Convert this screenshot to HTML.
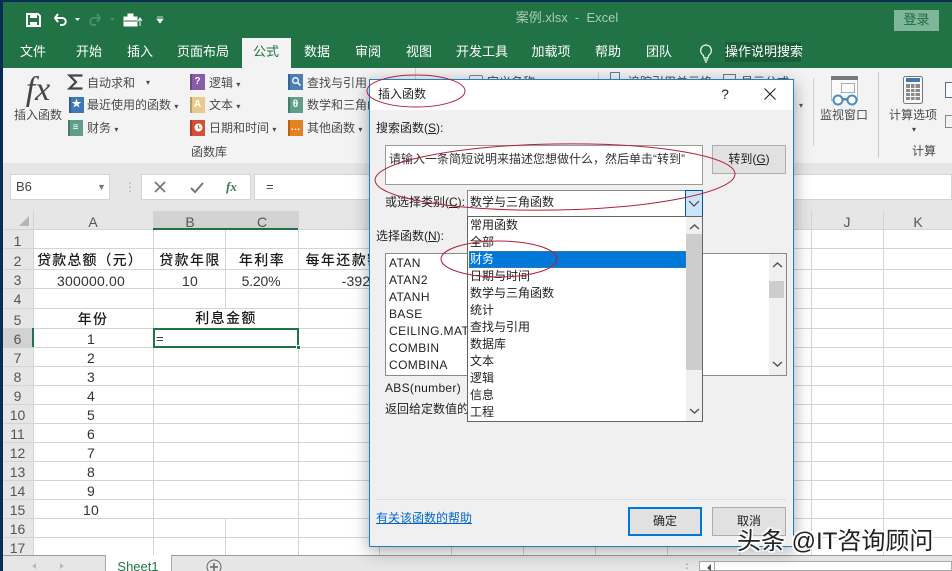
<!DOCTYPE html>
<html lang="zh"><head><meta charset="utf-8"><title>案例.xlsx - Excel</title>
<style>
html,body{margin:0;padding:0;background:#fff}
#p{position:relative;width:952px;height:571px;overflow:hidden;background:#fff;font-family:"Liberation Sans","Noto Sans CJK SC",sans-serif;font-size:12px;color:#444}
.a{position:absolute}
.t{position:absolute;height:20px;line-height:20px;white-space:nowrap}
.c{transform:translateX(-50%)}
.tab{color:#fff;font-size:13px;top:42px}
.r{color:#4a4a4a;font-size:12px}
.rn{position:absolute;left:3px;width:29px;text-align:center;font-size:14px;color:#555;height:20px;line-height:20px}
.cell{position:absolute;font-size:14px;color:#333;height:20px;line-height:20px;white-space:nowrap;transform:translateX(-50%);letter-spacing:.2px}
.h{font-weight:500;color:#1a1a1a;letter-spacing:1.4px}
.d{color:#222;font-size:12px}
.ic{position:absolute;width:15px;height:16px;color:#fff;font-size:10px;line-height:15px;text-align:center;font-weight:bold;box-shadow:inset 2px 0 rgba(0,0,0,.22)}
.ic svg{position:absolute;left:3px;top:2px}
.btn{position:absolute;background:#e1e1e1;border:1px solid #adadad;box-sizing:border-box;text-align:center;color:#222}
.li{position:absolute;left:2px;height:17px;line-height:17px;white-space:nowrap;color:#222}
</style></head><body><div id="p">

<!-- title bar -->
<div class="a" style="left:0;top:0;width:952px;height:68px;background:#217346"></div>
<div class="a" style="left:0;top:0;width:952px;height:2px;background:#0b2c52"></div>
<div class="a" style="left:0;top:0;width:3px;height:571px;background:#0b2c52;z-index:9"></div>
<svg class="a" style="left:0;top:0" width="180" height="38">
 <path d="M27 14h11l2 2v10H27z" fill="none" stroke="#fff" stroke-width="2"/><path d="M30 14h7v4h-7zM30 22h7v4h-7z" fill="#fff"/>
 <path d="M58 14l-3 4 3 4M55 18h7c5 0 5 7 0 7h-2" fill="none" stroke="#fff" stroke-width="2"/><path d="M75 18h5l-2.500 3z" fill="#fff"/>
 <path d="M97 14l3 4-3 4M100 18h-6c-5 0-5 7 0 7h2" fill="none" stroke="#4a8f6b" stroke-width="2"/><path d="M110 18h5l-2.500 3z" fill="#4a8f6b"/>
 <path d="M124 17h13v9h-13zM128 17v-3h5v3" fill="#fff" stroke="#fff"/><path d="M124 21h13" stroke="#217346"/><path d="M140 19v7M138 21l2-3 2 3" stroke="#fff" fill="none"/>
 <path d="M157 17h6M157 19h6l-3 4z" fill="#fff" stroke="#fff" stroke-width=".8"/>
</svg>
<div class="t c" style="left:567px;top:8px;color:#a9cdb9;font-size:13px">案例.xlsx&nbsp; -&nbsp; Excel</div>
<div class="t" style="left:894px;top:10px;width:45px;height:21px;line-height:20px;background:#7fb598;color:#1f6b42;text-align:center;font-size:13px">登录</div>

<!-- tabs -->
<div class="a" style="left:242px;top:38px;width:49px;height:31px;background:#f3f3f3"></div>
<div class="t tab c" style="left:33px">文件</div><div class="t tab c" style="left:89px">开始</div><div class="t tab c" style="left:140px">插入</div><div class="t tab c" style="left:203px">页面布局</div>
<div class="t tab c" style="left:266px;color:#217346">公式</div><div class="t tab c" style="left:317px">数据</div><div class="t tab c" style="left:368px">审阅</div><div class="t tab c" style="left:419px">视图</div><div class="t tab c" style="left:482px">开发工具</div><div class="t tab c" style="left:551px">加载项</div><div class="t tab c" style="left:608px">帮助</div><div class="t tab c" style="left:659px">团队</div>
<svg class="a" style="left:697px;top:43px" width="18" height="22"><path d="M9 2a5.500 5.500 0 0 0-3 10c1 1 1 2 1 3h4c0-1 0-2 1-3A5.500 5.500 0 0 0 9 2zM7 17h4M8 19h2" fill="none" stroke="#fff" stroke-width="1.200"/></svg>
<div class="t tab" style="left:725px;width:76px;background:#1b5f3a;text-align:center">操作说明搜索</div>

<!-- ribbon -->
<div class="a" style="left:0;top:68px;width:952px;height:95px;background:#f3f3f3;border-bottom:1px solid #d4d4d4"></div>
<div class="t c" style="left:38px;top:72px;height:36px;line-height:36px;font:italic 34px/36px 'Liberation Serif',serif;color:#444">fx</div>
<div class="t r c" style="left:38px;top:105px">插入函数</div>
<svg class="a" style="left:67px;top:73px" width="18" height="18"><path d="M15.500 2.500H2.500L9 9l-6.500 6.500h13" fill="none" stroke="#444" stroke-width="2.200"/></svg>
<div class="t r" style="left:87px;top:73px">自动求和</div><div class="t r" style="left:146px;top:73px;font-size:8px">▾</div>
<div class="ic" style="left:69px;top:97px;background:#3f78b5">★</div><div class="t r" style="left:87px;top:95px">最近使用的函数 <span style="font-size:8px">▾</span></div>
<div class="ic" style="left:68px;top:120px;background:#5e9e8a">≡</div><div class="t r" style="left:87px;top:118px">财务 <span style="font-size:8px">▾</span></div>
<div class="ic" style="left:190px;top:74px;background:#8a5ba8">?</div><div class="t r" style="left:209px;top:73px">逻辑 <span style="font-size:8px">▾</span></div>
<div class="ic" style="left:190px;top:97px;background:#eac98c">A</div><div class="t r" style="left:209px;top:95px">文本 <span style="font-size:8px">▾</span></div>
<div class="ic" style="left:190px;top:120px;background:#d24f38"><svg width="11" height="11"><circle cx="5.500" cy="5.500" r="4" fill="#fff"/><path d="M5.500 3v3h2" stroke="#d24f38" fill="none"/></svg></div><div class="t r" style="left:209px;top:118px">日期和时间 <span style="font-size:8px">▾</span></div>
<div class="ic" style="left:288px;top:74px;background:#4a7fb5"><svg width="11" height="11"><circle cx="4.500" cy="4.500" r="2.800" fill="none" stroke="#fff" stroke-width="1.300"/><path d="M6.500 6.500l3 3" stroke="#fff" stroke-width="1.500"/></svg></div><div class="t r" style="left:307px;top:73px">查找与引用</div>
<div class="ic" style="left:288px;top:97px;background:#5e9e8a">θ</div><div class="t r" style="left:307px;top:95px">数学和三角函数</div>
<div class="ic" style="left:288px;top:120px;background:#e6811f">…</div><div class="t r" style="left:307px;top:118px">其他函数 <span style="font-size:8px">▾</span></div>
<div class="t r c" style="left:209px;top:142px">函数库</div>
<div class="a" style="left:415px;top:68px;width:1px;height:12px;background:#d0d0d0"></div>
<div class="a" style="left:598px;top:72px;width:1px;height:8px;background:#d0d0d0"></div>
<div class="a" style="left:469px;top:75px;width:14px;height:8px;border:1px solid #888;box-sizing:border-box;border-radius:2px"></div>
<div class="t r" style="left:487px;top:72px">定义名称</div>
<div class="a" style="left:610px;top:72px;width:10px;height:8px;border:1px solid #5a7fa5;box-sizing:border-box"></div>
<div class="t r" style="left:628px;top:72px">追踪引用单元格</div>
<div class="a" style="left:723px;top:74px;width:13px;height:6px;border:1px solid #777;box-sizing:border-box"></div>
<div class="t r" style="left:741px;top:72px">显示公式</div>
<div class="t r" style="left:799px;top:96px;font-size:8px;color:#555">▾</div>
<div class="a" style="left:813px;top:78px;width:1px;height:68px;background:#d0d0d0"></div>
<div class="a" style="left:878px;top:72px;width:1px;height:86px;background:#c8c8c8"></div>
<svg class="a" style="left:829px;top:75px" width="34" height="32"><rect x="2.500" y="1.500" width="26" height="24" fill="#fbfbfb" stroke="#b8b8b8"/><rect x="2" y="1" width="27" height="4" fill="#7a7a7a"/><rect x="12.500" y="8.500" width="13" height="9" fill="none" stroke="#aaa"/><circle cx="9" cy="25" r="4.500" fill="#fff" stroke="#4a8ac4" stroke-width="2"/><circle cx="23" cy="25" r="4.500" fill="#fff" stroke="#4a8ac4" stroke-width="2"/><path d="M13 24h6" stroke="#4a8ac4" stroke-width="2"/></svg>
<div class="t r c" style="left:844px;top:105px">监视窗口</div>
<svg class="a" style="left:902px;top:75px" width="22" height="30"><rect x="1.500" y="1.500" width="19" height="27" rx="2" fill="#fafafa" stroke="#777"/><rect x="4" y="3" width="14" height="4" fill="#3f78b5"/><path d="M4 9h14v16H4z" fill="#8a8a8a"/><path d="M4 13.500h14M4 17.500h14M4 21.500h14M8.500 9v16M13 9v16" stroke="#fafafa"/></svg>
<svg class="a" style="left:944px;top:80px" width="8" height="50"><rect x="1.500" y="2.500" width="10" height="15" fill="#fafafa" stroke="#5a6f85"/><rect x="1.500" y="35.500" width="10" height="12" fill="none" stroke="#888"/></svg>
<div class="t r c" style="left:913px;top:105px">计算选项</div><div class="t c" style="left:914px;top:120px;font-size:8px">▾</div>
<div class="t r c" style="left:924px;top:141px">计算</div>

<!-- formula bar -->
<div class="a" style="left:0;top:163px;width:952px;height:48px;background:#e6e6e6"></div>
<div class="a" style="left:10px;top:174px;width:100px;height:26px;background:#fff;border:1px solid #d4d4d4;box-sizing:border-box"></div>
<div class="t" style="left:16px;top:177px;font-size:13px">B6</div>
<div class="t" style="left:97px;top:177px;font-size:9px;color:#777">▼</div>
<div class="t" style="left:124px;top:177px;color:#aaa;font-size:12px">⋮</div>
<div class="a" style="left:141px;top:174px;width:110px;height:26px;background:#fff;border:1px solid #d4d4d4;box-sizing:border-box"></div>
<svg class="a" style="left:150px;top:178px" width="95" height="18"><path d="M5 4l10 10M15 4L5 14" stroke="#777" stroke-width="1.800"/><path d="M41 10l4 4 8-9" fill="none" stroke="#777" stroke-width="2"/></svg>
<div class="t" style="left:226px;top:177px;font:italic bold 13px 'Liberation Serif',serif;line-height:20px;color:#3a7a4a">fx</div>
<div class="a" style="left:254px;top:174px;width:698px;height:26px;background:#fff;border:1px solid #d4d4d4;box-sizing:border-box"></div>
<div class="t" style="left:266px;top:177px;font-size:13px">=</div>

<!-- grid -->
<div class="a" style="left:3px;top:211px;width:30px;height:344px;background:#e6e6e6"></div>
<div class="a" style="left:3px;top:211px;width:949px;height:18px;background:#e6e6e6"></div>
<div class="a" style="left:153px;top:211px;width:145px;height:18px;background:#d2d2d2"></div>
<div class="a" style="left:3px;top:328px;width:30px;height:19px;background:#d2d2d2"></div>
<svg class="a" style="left:0;top:211px" width="952" height="344">
<g stroke="#d4d4d4" fill="none" shape-rendering="crispEdges">
<path d="M3 18.500H952M3 37.500H952M3 58.500H952M3 77.500H952M3 97.500H952M3 117.500H952M3 136.500H952M3 155.500H952M3 174.500H952M3 193.500H952M3 212.500H952M3 231.500H952M3 250.500H952M3 269.500H952M3 288.500H952M3 307.500H952M3 326.500H952"/>
<path d="M33.500 0V344M153.500 0V344M225.500 0V97M225.500 307V344M298.500 0V344M379.500 0V344M451.500 0V344M523.500 0V344M595.500 0V344M667.500 0V344M739.500 0V344M811.500 0V344M883.500 0V344"/>
</g>
<path d="M19 15L29 5V15z" fill="#b4b4b4"/>
<path d="M153 17h145v2H153z" fill="#217346"/>
<path d="M32 117h2v19h-2z" fill="#217346"/>
</svg>
<div class="t c" style="left:93px;top:212px;font-size:14px;color:#555">A</div><div class="t c" style="left:190px;top:212px;font-size:14px;color:#555">B</div><div class="t c" style="left:262px;top:212px;font-size:14px;color:#555">C</div><div class="t c" style="left:847px;top:212px;font-size:14px;color:#555">J</div><div class="t c" style="left:918px;top:212px;font-size:14px;color:#555">K</div>
<div class="rn" style="top:231px">1</div><div class="rn" style="top:251px">2</div><div class="rn" style="top:270px">3</div><div class="rn" style="top:289px">4</div><div class="rn" style="top:310px">5</div><div class="rn" style="top:329px">6</div><div class="rn" style="top:348px">7</div><div class="rn" style="top:367px">8</div><div class="rn" style="top:386px">9</div><div class="rn" style="top:405px">10</div><div class="rn" style="top:424px">11</div><div class="rn" style="top:443px">12</div><div class="rn" style="top:462px">13</div><div class="rn" style="top:481px">14</div><div class="rn" style="top:500px">15</div><div class="rn" style="top:519px">16</div><div class="rn" style="top:538px">17</div>
<div class="cell h" style="left:90px;top:250px;letter-spacing:1.100px">贷款总额（元）</div><div class="cell h" style="left:190px;top:250px">贷款年限</div><div class="cell h" style="left:262px;top:250px">年利率</div><div class="cell h" style="left:344px;top:250px">每年还款额</div>
<div class="cell" style="left:91px;top:271px">300000.00</div><div class="cell" style="left:190px;top:271px">10</div><div class="cell" style="left:261px;top:271px;letter-spacing:-.2px">5.20%</div><div class="cell" style="left:356px;top:271px">-392</div>
<div class="cell h" style="left:93px;top:309px">年份</div><div class="cell h" style="left:226px;top:308px">利息金额</div>
<div class="cell" style="left:91px;top:329px">1</div><div class="cell" style="left:91px;top:348px">2</div><div class="cell" style="left:91px;top:367px">3</div><div class="cell" style="left:91px;top:386px">4</div><div class="cell" style="left:91px;top:405px">5</div><div class="cell" style="left:91px;top:424px">6</div><div class="cell" style="left:91px;top:443px">7</div><div class="cell" style="left:91px;top:462px">8</div><div class="cell" style="left:91px;top:481px">9</div><div class="cell" style="left:91px;top:500px">10</div>
<div class="a" style="left:153px;top:328px;width:146px;height:20px;border:2px solid #217346;box-sizing:border-box;background:#fff"></div>
<div class="a" style="left:296px;top:345px;width:5px;height:5px;background:#217346;border:1px solid #fff;box-sizing:border-box"></div>
<div class="t" style="left:156px;top:329px;font-size:13px;color:#333">=</div>

<!-- sheet tabs -->
<div class="a" style="left:3px;top:555px;width:949px;height:16px;background:#e6e6e6;border-top:1px solid #9a9a9a;box-sizing:border-box"></div>
<div class="a" style="left:105px;top:555px;width:67px;height:16px;background:#fff;border-left:1px solid #aaa;border-right:1px solid #aaa;box-sizing:border-box"></div>
<div class="t c" style="left:138px;top:557px;color:#217346;font-size:13px">Sheet1</div>
<svg class="a" style="left:0;top:556px" width="240" height="15"><path d="M36 7l-4 3 4 3zM60 7l4 3-4 3z" fill="#bbb"/><circle cx="214" cy="11" r="7" fill="none" stroke="#666"/><path d="M214 7v8M210 11h8" stroke="#666" stroke-width="1.500"/></svg>
<div class="t" style="left:681px;top:558px;color:#999;font-size:12px">⋮</div>
<div class="a" style="left:699px;top:561px;width:253px;height:10px;background:#fff;border:1px solid #aaa;box-sizing:border-box"></div>
<svg class="a" style="left:699px;top:561px" width="16" height="10"><path d="M12 3L8 7l4 3z" fill="#555"/><path d="M15.500 0v10" stroke="#aaa"/></svg>

<!-- dialog -->
<div class="a" style="left:369px;top:79px;width:425px;height:468px;background:#f0f0f0;border:1px solid #1f7fc4;box-sizing:border-box;box-shadow:0 4px 16px rgba(0,0,0,.35)">
 <div class="a" style="left:0;top:0;width:423px;height:30px;background:#fff"></div>
</div>
<div class="t d" style="left:378px;top:84px">插入函数</div>
<div class="t c" style="left:725px;top:84px;font-size:14px;color:#222">?</div>
<svg class="a" style="left:763px;top:87px" width="14" height="14"><path d="M1.500 1.500l11 11M12.500 1.500l-11 11" stroke="#222" stroke-width="1.100"/></svg>
<div class="t d" style="left:376px;top:118px">搜索函数(<u>S</u>):</div>
<div class="a" style="left:385px;top:145px;width:318px;height:40px;background:#fff;border:1px solid #9a9a9a;box-sizing:border-box"></div>
<div class="t d" style="left:389px;top:149px;color:#333">请输入一条简短说明来描述您想做什么，然后单击“转到”</div>
<div class="btn" style="left:712px;top:145px;width:74px;height:29px;line-height:27px">转到(<u>G</u>)</div>
<div class="t d" style="left:385px;top:192px">或选择类别(<u>C</u>):</div>
<div class="a" style="left:467px;top:190px;width:236px;height:27px;background:#fff;border:1px solid #8a8a8a;box-sizing:border-box"></div>
<div class="t d" style="left:470px;top:192px">数学与三角函数</div>
<div class="a" style="left:685px;top:190px;width:18px;height:27px;background:#cce4f7;border:1px solid #005499;box-sizing:border-box"></div>
<svg class="a" style="left:685px;top:197px" width="18" height="12"><path d="M4 4l5 5 5-5" fill="none" stroke="#444" stroke-width="1.200"/></svg>
<div class="t d" style="left:376px;top:226px">选择函数(<u>N</u>):</div>

<div class="a" style="left:385px;top:253px;width:402px;height:123px;background:#fff;border:1px solid #8a8a8a;box-sizing:border-box"></div>
<div class="t d" style="left:389px;top:253px;letter-spacing:.4px">ATAN</div><div class="t d" style="left:389px;top:270px;letter-spacing:.4px">ATAN2</div><div class="t d" style="left:389px;top:287px;letter-spacing:.4px">ATANH</div><div class="t d" style="left:389px;top:304px;letter-spacing:.4px">BASE</div><div class="t d" style="left:389px;top:321px;letter-spacing:.4px">CEILING.MATH</div><div class="t d" style="left:389px;top:338px;letter-spacing:.4px">COMBIN</div><div class="t d" style="left:389px;top:355px;letter-spacing:.4px">COMBINA</div>
<div class="a" style="left:769px;top:254px;width:17px;height:121px;background:#f0f0f0"></div>
<div class="a" style="left:769px;top:281px;width:15px;height:17px;background:#cdcdcd"></div>
<svg class="a" style="left:769px;top:258px" width="17" height="114"><path d="M4 9l4.500-4L13 9M4 104l4.500 4 4.500-4" fill="none" stroke="#555" stroke-width="1.500"/></svg>
<div class="t d" style="left:385px;top:378px;letter-spacing:.3px">ABS(number)</div>
<div class="t d" style="left:385px;top:399px">返回给定数值的绝对值</div>

<div class="a" style="left:467px;top:216px;width:236px;height:206px;background:#fff;border:1px solid #646464;box-sizing:border-box;overflow:hidden">
 <div class="a" style="left:1px;top:34px;width:217px;height:17px;background:#0078d7;outline:1px dotted #5a7f9f;outline-offset:-1px"></div>
 <div class="li" style="top:0">常用函数</div><div class="li" style="top:17px">全部</div><div class="li" style="top:34px;color:#fff">财务</div><div class="li" style="top:51px">日期与时间</div><div class="li" style="top:68px">数学与三角函数</div><div class="li" style="top:85px">统计</div><div class="li" style="top:102px">查找与引用</div><div class="li" style="top:119px">数据库</div><div class="li" style="top:136px">文本</div><div class="li" style="top:153px">逻辑</div><div class="li" style="top:170px">信息</div><div class="li" style="top:187px">工程</div>
 <div class="a" style="left:218px;top:0;width:17px;height:204px;background:#f0f0f0"></div>
 <div class="a" style="left:218px;top:17px;width:17px;height:136px;background:#cdcdcd"></div>
 <svg class="a" style="left:218px;top:0" width="17" height="204"><path d="M4 12l4.500-4L13 12M4 192l4.500 4 4.500-4" fill="none" stroke="#555" stroke-width="1.500"/></svg>
</div>

<div class="a" style="left:376px;top:499px;width:410px;height:1px;background:#dcdcdc"></div>
<div class="t" style="left:376px;top:508px;color:#0066cc;text-decoration:underline">有关该函数的帮助</div>
<div class="btn" style="left:628px;top:507px;width:74px;height:29px;line-height:25px;border:2px solid #0078d7">确定</div>
<div class="btn" style="left:712px;top:507px;width:74px;height:29px;line-height:27px">取消</div>

<!-- annotations -->
<svg class="a" style="left:0;top:0;z-index:5" width="952" height="571">
<g fill="none" stroke="#b32038" stroke-width="1">
<ellipse cx="416" cy="91" rx="49" ry="16"/>
<ellipse cx="555" cy="177" rx="180" ry="33" transform="rotate(-1 555 177)"/>
<ellipse cx="499" cy="259" rx="58" ry="18"/>
</g></svg>

<!-- watermark -->
<div class="t" style="left:737px;top:529px;height:26px;line-height:26px;font-size:24px;color:#222;z-index:6;text-shadow:1.500px 1.500px 0 #fff,-1.500px -1.500px 0 #fff,1.500px -1.500px 0 #fff,-1.500px 1.500px 0 #fff">头条 @IT咨询顾问</div>
</div></body></html>
